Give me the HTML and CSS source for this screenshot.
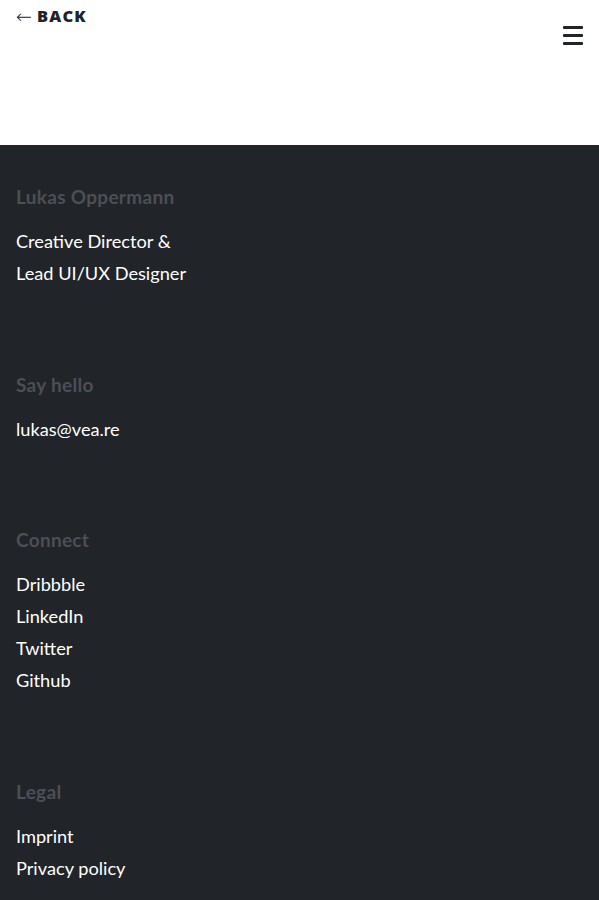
FILE: index.html
```html
<!DOCTYPE html>
<html lang="en">
<head>
<meta charset="utf-8">
<title>Lukas Oppermann</title>
<link rel="stylesheet" href="styles.css">
</head>
<body>
<header class="top">
  <a class="back" href="#"><span class="arrow">&larr;</span> BACK</a>
  <button class="menu" aria-label="Menu"><span></span><span></span><span></span></button>
</header>
<footer class="footer">
  <section class="group">
    <h2 class="title">Lukas Oppermann</h2>
    <p class="text">Creative Director &amp;<br>Lead UI/UX Designer</p>
  </section>
  <section class="group">
    <h2 class="title">Say hello</h2>
    <p class="text">lukas@vea.re</p>
  </section>
  <section class="group">
    <h2 class="title">Connect</h2>
    <ul class="links">
      <li>Dribbble</li>
      <li>LinkedIn</li>
      <li>Twitter</li>
      <li>Github</li>
    </ul>
  </section>
  <section class="group">
    <h2 class="title">Legal</h2>
    <ul class="links">
      <li>Imprint</li>
      <li>Privacy policy</li>
    </ul>
  </section>
</footer>
</body>
</html>
```
FILE: styles.css
```css
html, body { margin: 0; padding: 0; }
body {
  background: #212429;
  font-family: Lato, "Noto Sans", sans-serif;
}
.top {
  height: 145px;
  position: relative;
  box-sizing: border-box;
  padding: 6px 16px 0;
  background: #fff;
}
.back {
  display: inline-flex;
  align-items: center;
  gap: 5px;
  color: #202328;
  text-decoration: none;
  font-family: "Open Sans", sans-serif;
  font-weight: 800;
  font-size: 16.5px;
  letter-spacing: 1.2px;
  line-height: 20px;
}
.arrow {
  font-family: "DejaVu Sans", sans-serif;
  font-weight: 300;
  font-size: 19px;
  letter-spacing: 0;
}
.menu {
  position: absolute;
  top: 26px;
  right: 16px;
  width: 20px;
  height: 19px;
  padding: 0;
  border: 0;
  background: none;
  display: flex;
  flex-direction: column;
  justify-content: space-between;
}
.menu span {
  display: block;
  height: 3px;
  background: #202328;
  border-radius: 1px;
}
.footer {
  background: #212429;
  padding: 36px 16px 20px;
  display: flex;
  flex-direction: column;
  gap: 79.5px;
}
.title {
  margin: 0 0 12px;
  font-size: 19px;
  font-weight: 700;
  letter-spacing: 0.3px;
  color: #4c4f55;
  line-height: 32px;
}
.text, .links {
  margin: 0;
  padding: 0;
  list-style: none;
  font-size: 18.2px;
  line-height: 32px;
  color: #fff;
}
```
